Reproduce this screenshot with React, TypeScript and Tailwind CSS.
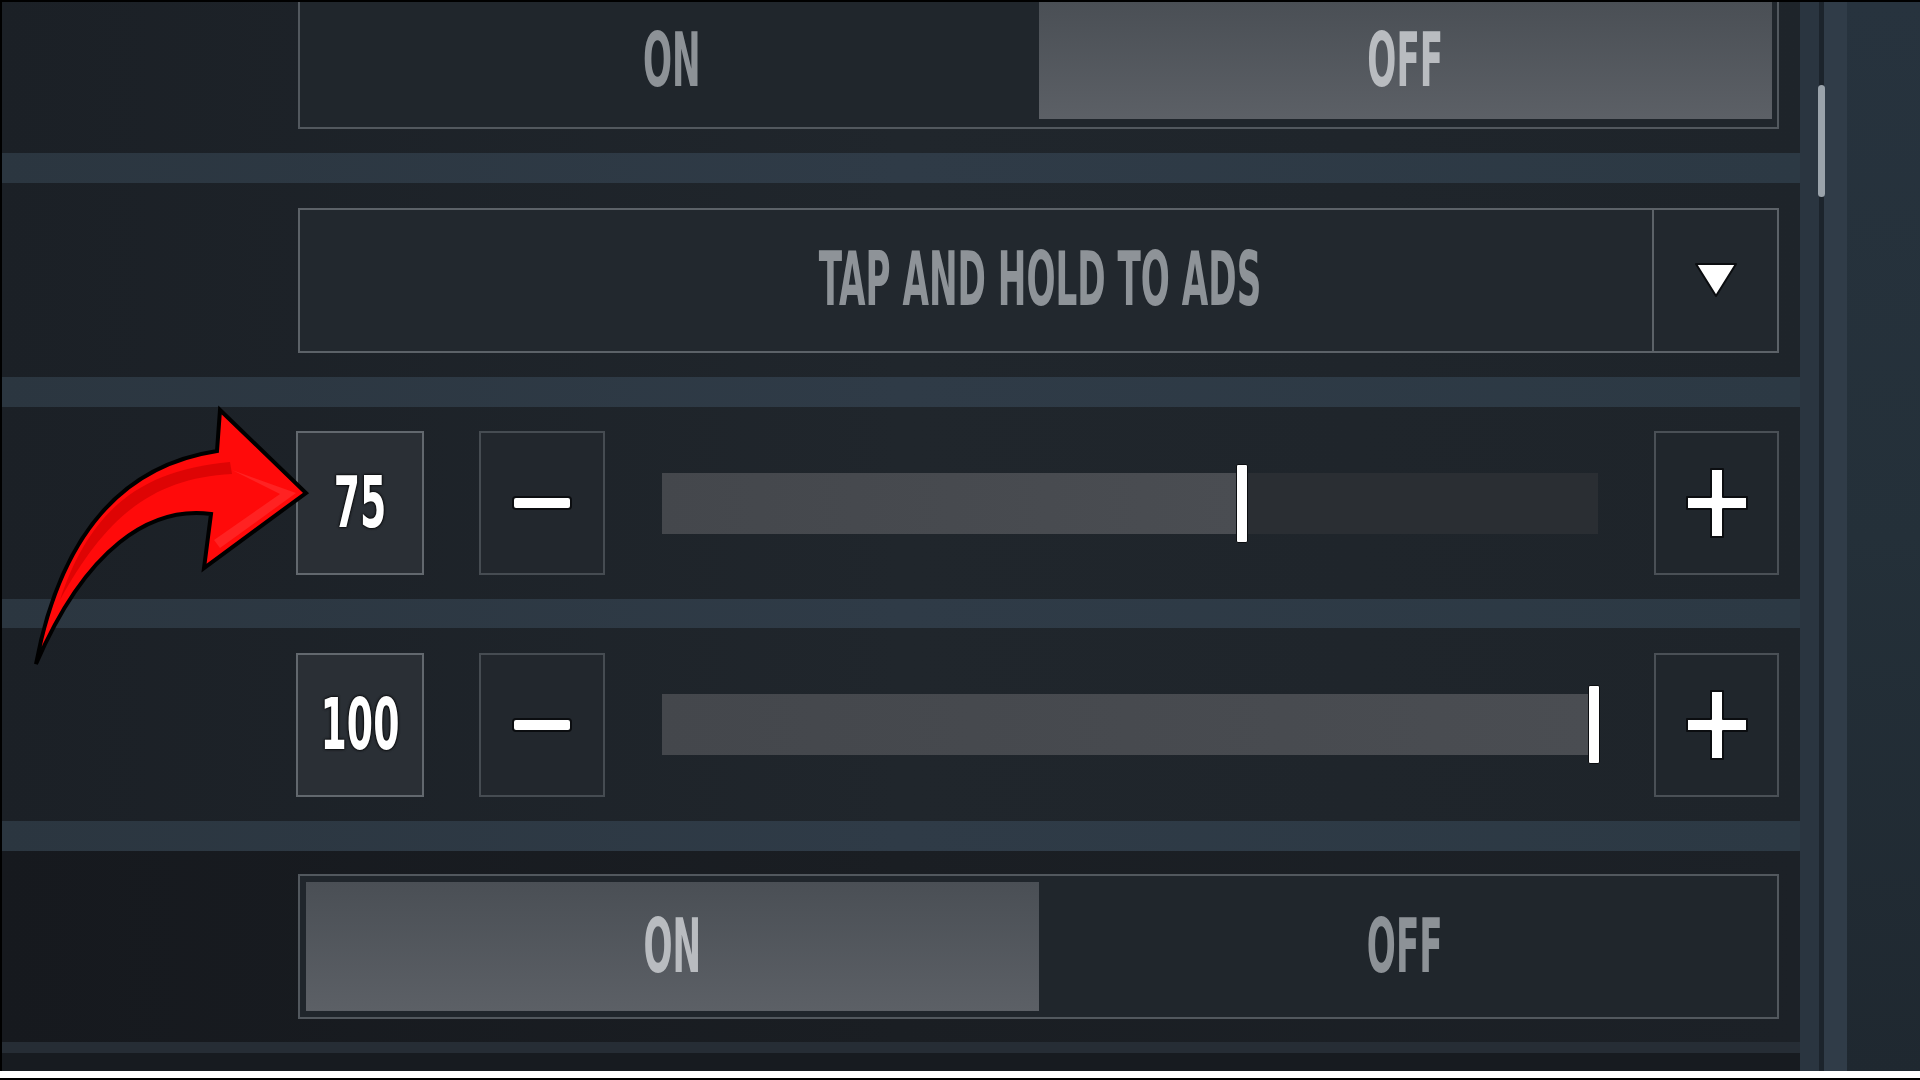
import React from 'react';

const FONT = "font-['Liberation_Sans_Narrow','DejaVu_Sans_Condensed',sans-serif] font-bold";

function ToggleLabel({ text, active }: { text: string; active: boolean }) {
  return (
    <span
      className={`${FONT} inline-block text-[38px] leading-none scale-y-[1.95] ${
        active ? 'text-[#b9bcc0]' : 'text-[#8d9297]'
      }`}
    >
      {text}
    </span>
  );
}

function Toggle({ value, cutTop }: { value: 'on' | 'off'; cutTop?: boolean }) {
  const half = (label: string, active: boolean) => (
    <div
      className={`flex-1 flex items-center justify-center ${
        active ? 'bg-gradient-to-b from-[#4a4f55] to-[#5c6066]' : ''
      }`}
    >
      <ToggleLabel text={label} active={active} />
    </div>
  );
  return (
    <div
      className={`w-full flex border-[#52585e] bg-[#20262c] ${
        cutTop ? 'h-[127px] border-x-2 border-b-2 px-[5px] pb-[8px]' : 'h-[145px] border-2 p-[6px]'
      }`}
    >
      {half('ON', value === 'on')}
      {half('OFF', value === 'off')}
    </div>
  );
}

function Dropdown({ text }: { text: string }) {
  return (
    <div className="w-full h-[145px] flex border-2 border-[#5c6268] bg-[#22282e]">
      <div className="flex-1 flex items-center justify-center pl-[128px]">
        <span className={`${FONT} inline-block text-[38px] leading-none scale-y-[1.95] text-[#8e9398]`}>
          {text}
        </span>
      </div>
      <div className="w-[125px] flex items-center justify-center border-l-2 border-[#5c6268]">
        <svg width="44" height="36" viewBox="0 0 44 36">
          <path d="M2 2 H42 L22 34 Z" fill="#ffffff" stroke="#0b0d10" strokeWidth="2" strokeLinejoin="round" />
        </svg>
      </div>
    </div>
  );
}

function PlusIcon() {
  return (
    <svg width="64" height="72" viewBox="0 0 64 72">
      <path
        d="M26 2 H38 V30 H62 V42 H38 V70 H26 V42 H2 V30 H26 Z"
        fill="#ffffff"
        stroke="#0b0d10"
        strokeWidth="2"
        strokeLinejoin="round"
      />
    </svg>
  );
}

function MinusIcon() {
  return (
    <svg width="64" height="18" viewBox="0 0 64 18">
      <rect x="3" y="3" width="58" height="12" rx="3" fill="#ffffff" stroke="#0b0d10" strokeWidth="2" />
    </svg>
  );
}

function SliderRow({ value, pct }: { value: string; pct: number }) {
  return (
    <div className="flex items-center w-full">
      <div className="w-[128px] h-[144px] flex items-center justify-center border-2 border-[#62686e] bg-[#2a2f35]">
        <span
          className={`${FONT} inline-block text-[42px] leading-none scale-y-[1.7] text-white [text-shadow:0_0_2px_#000,0_0_2px_#000]`}
        >
          {value}
        </span>
      </div>
      <div className="ml-[55px] w-[126px] h-[144px] flex items-center justify-center border-2 border-[#464c52] bg-[#22272d]">
        <MinusIcon />
      </div>
      <div className="ml-[57px] flex-1 h-[61px] bg-[#2a2e33] relative">
        <div className="h-full bg-gradient-to-r from-[#44474c] to-[#4a4d52]" style={{ width: `${pct}%` }} />
        <div
          className="absolute top-[-9px] h-[79px] w-[12px] bg-white rounded-[2px] border border-[#0b0d10] -translate-x-1/2"
          style={{ left: `${pct}%` }}
        />
      </div>
      <div className="ml-[56px] w-[125px] h-[144px] flex items-center justify-center border-2 border-[#4a5056] bg-[#20262c]">
        <PlusIcon />
      </div>
    </div>
  );
}

function Card({
  children,
  className = '',
  dark,
}: {
  children: React.ReactNode;
  className?: string;
  dark?: boolean;
}) {
  return (
    <div
      className={`flex items-center pr-[21px] bg-gradient-to-r ${
        dark ? 'from-[#16191e] via-[#1a1e23] to-[#1c2127]' : 'from-[#1b2026] via-[#20262c] to-[#1e242a]'
      } ${className}`}
    >
      {children}
    </div>
  );
}

function RedArrow() {
  return (
    <svg className="absolute left-0 top-0 pointer-events-none" width="320" height="680" viewBox="0 0 320 680">
      <path
        d="M36 664 C52 580 92 470 217 451 L220 410 L306 493 L204 568 L211 514 C150 506 86 548 36 664 Z"
        fill="#ff0a0a"
        stroke="#000000"
        strokeWidth="4"
        strokeLinejoin="miter"
      />
      <path
        d="M60 600 C90 510 140 470 230 462 L232 474 C150 478 104 520 60 600 Z"
        fill="#c80000"
        opacity="0.6"
      />
      <path d="M232 470 L296 493 L220 548 L214 540 L280 494 Z" fill="#ff3a3a" opacity="0.5" />
    </svg>
  );
}

export default function App() {
  return (
    <div className="w-[1920px] h-[1080px] bg-black flex flex-col overflow-hidden relative">
      <div className="flex-1 flex pt-[2px] pl-[2px] min-h-0">
        {/* settings list */}
        <div className="w-[1798px] flex flex-col bg-gradient-to-r from-[#2b3640] via-[#2f3b47] to-[#2c3944]">
          <Card className="h-[151px] pb-[24px] items-end pl-[296px]">
            <div className="w-full">
              <Toggle value="off" cutTop />
            </div>
          </Card>
          <div className="h-[30px]" />
          <Card className="h-[194px] pl-[296px]">
            <Dropdown text="TAP AND HOLD TO ADS" />
          </Card>
          <div className="h-[30px]" />
          <Card className="h-[192px] pl-[294px]">
            <SliderRow value="75" pct={62} />
          </Card>
          <div className="h-[29px]" />
          <Card className="h-[193px] pl-[294px]">
            <SliderRow value="100" pct={99.6} />
          </Card>
          <div className="h-[30px]" />
          <Card className="h-[191px] pl-[296px]" dark>
            <Toggle value="on" />
          </Card>
          <div className="h-[11px] bg-[#262d35]" />
          <div className="flex-1 bg-[#171b20]" />
        </div>
        {/* scrollbar */}
        <div className="w-[47px] flex bg-[#2a3540]">
          <div className="w-[19px]" />
          <div className="w-[5px] bg-[#1c242c] relative">
            <div className="absolute left-[-1px] top-[83px] w-[7px] h-[112px] rounded-full bg-[#9aa3ab]" />
          </div>
          <div className="flex-1 bg-[#303c48]" />
        </div>
        <div className="flex-1 bg-gradient-to-b from-[#27333e] via-[#243039] to-[#1f2830]" />
      </div>
      <div className="h-[7px] bg-white" />
      <div className="h-[2px] bg-black" />
      <RedArrow />
    </div>
  );
}
